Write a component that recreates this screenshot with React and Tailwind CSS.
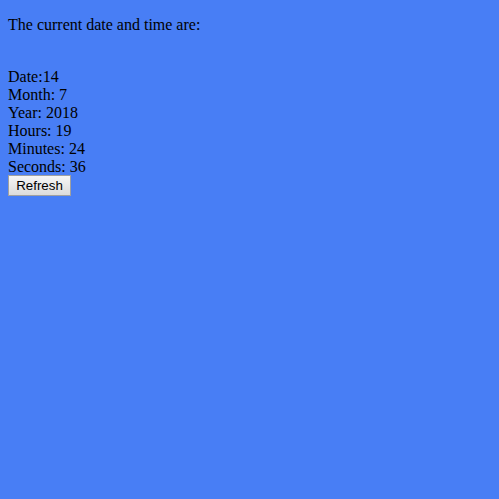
export default function App() {
  return (
    <div className="min-h-[499px] w-full bg-[#487ef5] px-2 text-black" style={{ fontFamily: '"Liberation Serif", serif' }}>
      <p className="pt-4 text-[16px] leading-[18px]">The current date and time are:</p>
      <div className="mt-4 text-[16px] leading-[18px]">
        <div className="h-[18px]"></div>
        <div>Date:14</div>
        <div>Month: 7</div>
        <div>Year: 2018</div>
        <div>Hours: 19</div>
        <div>Minutes: 24</div>
        <div>Seconds: 36</div>
        <button
          className="mt-[-1px] h-[21px] w-[63px] border border-[#a0a0a0] bg-gradient-to-b from-[#f6f6f6] to-[#dcdcdc] text-[13.33px] leading-[19px] text-black"
          style={{ fontFamily: '"Liberation Sans", Arial, sans-serif' }}
        >
          Refresh
        </button>
      </div>
    </div>
  );
}
